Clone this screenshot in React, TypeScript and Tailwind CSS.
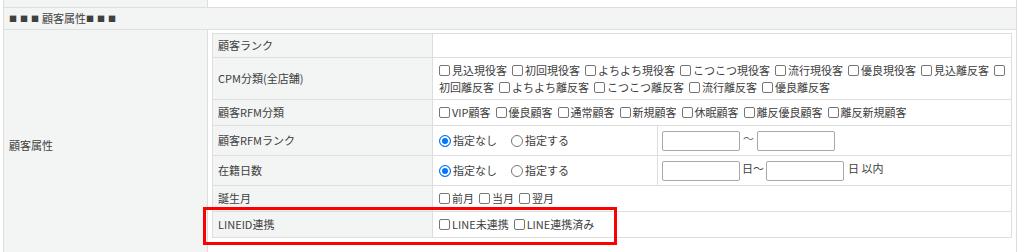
import React from "react";

const Box = () => (
  <span className="inline-block w-[11px] h-[11px] border border-[#767676] rounded-[2px] bg-white mr-[2px] align-[-1px]" />
);

const Radio = ({ on }: { on?: boolean }) =>
  on ? (
    <span className="inline-block w-[12px] h-[12px] rounded-full border border-[#0075ff] bg-[#0075ff] shadow-[inset_0_0_0_2px_white] mr-[2px] align-[-2px]" />
  ) : (
    <span className="inline-block w-[12px] h-[12px] rounded-full border border-[#767676] bg-white mr-[2px] align-[-2px]" />
  );

const Checks = ({ items }: { items: string[] }) => (
  <>
    {items.map((t, i) => (
      <span key={i} className="mr-[5px]">
        <Box />
        {t}
      </span>
    ))}
  </>
);

const Field = () => (
  <span className="inline-block w-[78px] h-[20px] border border-[#a9a9a9] rounded-[2px] bg-white align-middle" />
);

const Squares = () => (
  <span className="text-[8px] tracking-[3px] align-[1px]">■■■</span>
);

const label = "border border-[#dedede] bg-[#f3f4f4] pl-[5px] align-middle";
const value = "border border-[#dedede] bg-white pl-[6px] align-middle";

export default function App() {
  return (
    <div className="relative w-[1024px] h-[252px] overflow-hidden bg-white text-[11px] leading-[17px] text-[#404040] font-['Noto_Sans_CJK_JP',sans-serif]">
      <table className="ml-[3px] w-[1014px] border-collapse table-fixed mt-[-1px]">
        <colgroup>
          <col className="w-[204px]" />
          <col />
        </colgroup>
        <tbody>
          <tr>
            <td className="h-[8px] border border-[#dedede] bg-[#f3f4f4]" />
            <td className="h-[8px] border border-[#dedede] bg-white" />
          </tr>
          <tr>
            <td colSpan={2} className="h-[22px] border border-[#dedede] bg-[#f3f4f4] pl-[5px] align-middle">
              <Squares />
              顧客属性
              <Squares />
            </td>
          </tr>
          <tr>
            <td className="border border-[#dedede] bg-[#f3f4f4] pl-[5px] align-middle">顧客属性</td>
            <td className="border border-[#dedede] bg-white pl-[4px] pr-[4px] pt-[3px] pb-[22px]">
              <table className="w-full border-collapse table-fixed">
                <colgroup>
                  <col className="w-[220px]" />
                  <col className="w-[225px]" />
                  <col />
                </colgroup>
                <tbody>
                  <tr>
                    <td className={`${label} h-[24px]`}>顧客ランク</td>
                    <td colSpan={2} className={`${value} h-[24px]`} />
                  </tr>
                  <tr>
                    <td className={`${label} h-[42px]`}>CPM分類(全店舗)</td>
                    <td colSpan={2} className={`${value} h-[42px] whitespace-nowrap`}>
                      <Checks items={["見込現役客", "初回現役客", "よちよち現役客", "こつこつ現役客", "流行現役客", "優良現役客", "見込離反客"]} />
                      <Box />
                      <br />
                      <span className="mr-[5px]">初回離反客</span>
                      <Checks items={["よちよち離反客", "こつこつ離反客", "流行離反客", "優良離反客"]} />
                    </td>
                  </tr>
                  <tr>
                    <td className={`${label} h-[26px]`}>顧客RFM分類</td>
                    <td colSpan={2} className={`${value} h-[26px] whitespace-nowrap`}>
                      <Checks items={["VIP顧客", "優良顧客", "通常顧客", "新規顧客", "休眠顧客", "離反優良顧客", "離反新規顧客"]} />
                    </td>
                  </tr>
                  <tr>
                    <td className={`${label} h-[30px]`}>顧客RFMランク</td>
                    <td className={`${value} h-[30px] whitespace-nowrap`}>
                      <Radio on />
                      指定なし
                      <span className="ml-[14px]" />
                      <Radio />
                      指定する
                    </td>
                    <td className="border border-[#dedede] bg-white pl-[4px] align-middle whitespace-nowrap">
                      <Field />
                      <span className="mx-[3px] text-[#666]">～</span>
                      <Field />
                    </td>
                  </tr>
                  <tr>
                    <td className={`${label} h-[30px]`}>在籍日数</td>
                    <td className={`${value} h-[30px] whitespace-nowrap`}>
                      <Radio on />
                      指定なし
                      <span className="ml-[14px]" />
                      <Radio />
                      指定する
                    </td>
                    <td className="border border-[#dedede] bg-white pl-[4px] align-middle whitespace-nowrap">
                      <Field />
                      <span className="ml-[2px] mr-[2px]">日～</span>
                      <Field />
                      <span className="ml-[4px]">日 以内</span>
                    </td>
                  </tr>
                  <tr>
                    <td className={`${label} h-[26px]`}>誕生月</td>
                    <td colSpan={2} className={`${value} h-[26px] whitespace-nowrap`}>
                      <Checks items={["前月", "当月", "翌月"]} />
                    </td>
                  </tr>
                  <tr>
                    <td className={`${label} h-[26px]`}>LINEID連携</td>
                    <td colSpan={2} className={`${value} h-[26px] whitespace-nowrap`}>
                      <Checks items={["LINE未連携", "LINE連携済み"]} />
                    </td>
                  </tr>
                </tbody>
              </table>
            </td>
          </tr>
        </tbody>
      </table>
      <div className="absolute left-[203px] top-[207px] w-[414px] h-[38px] border-[3px] border-[#ff0000]" />
    </div>
  );
}
